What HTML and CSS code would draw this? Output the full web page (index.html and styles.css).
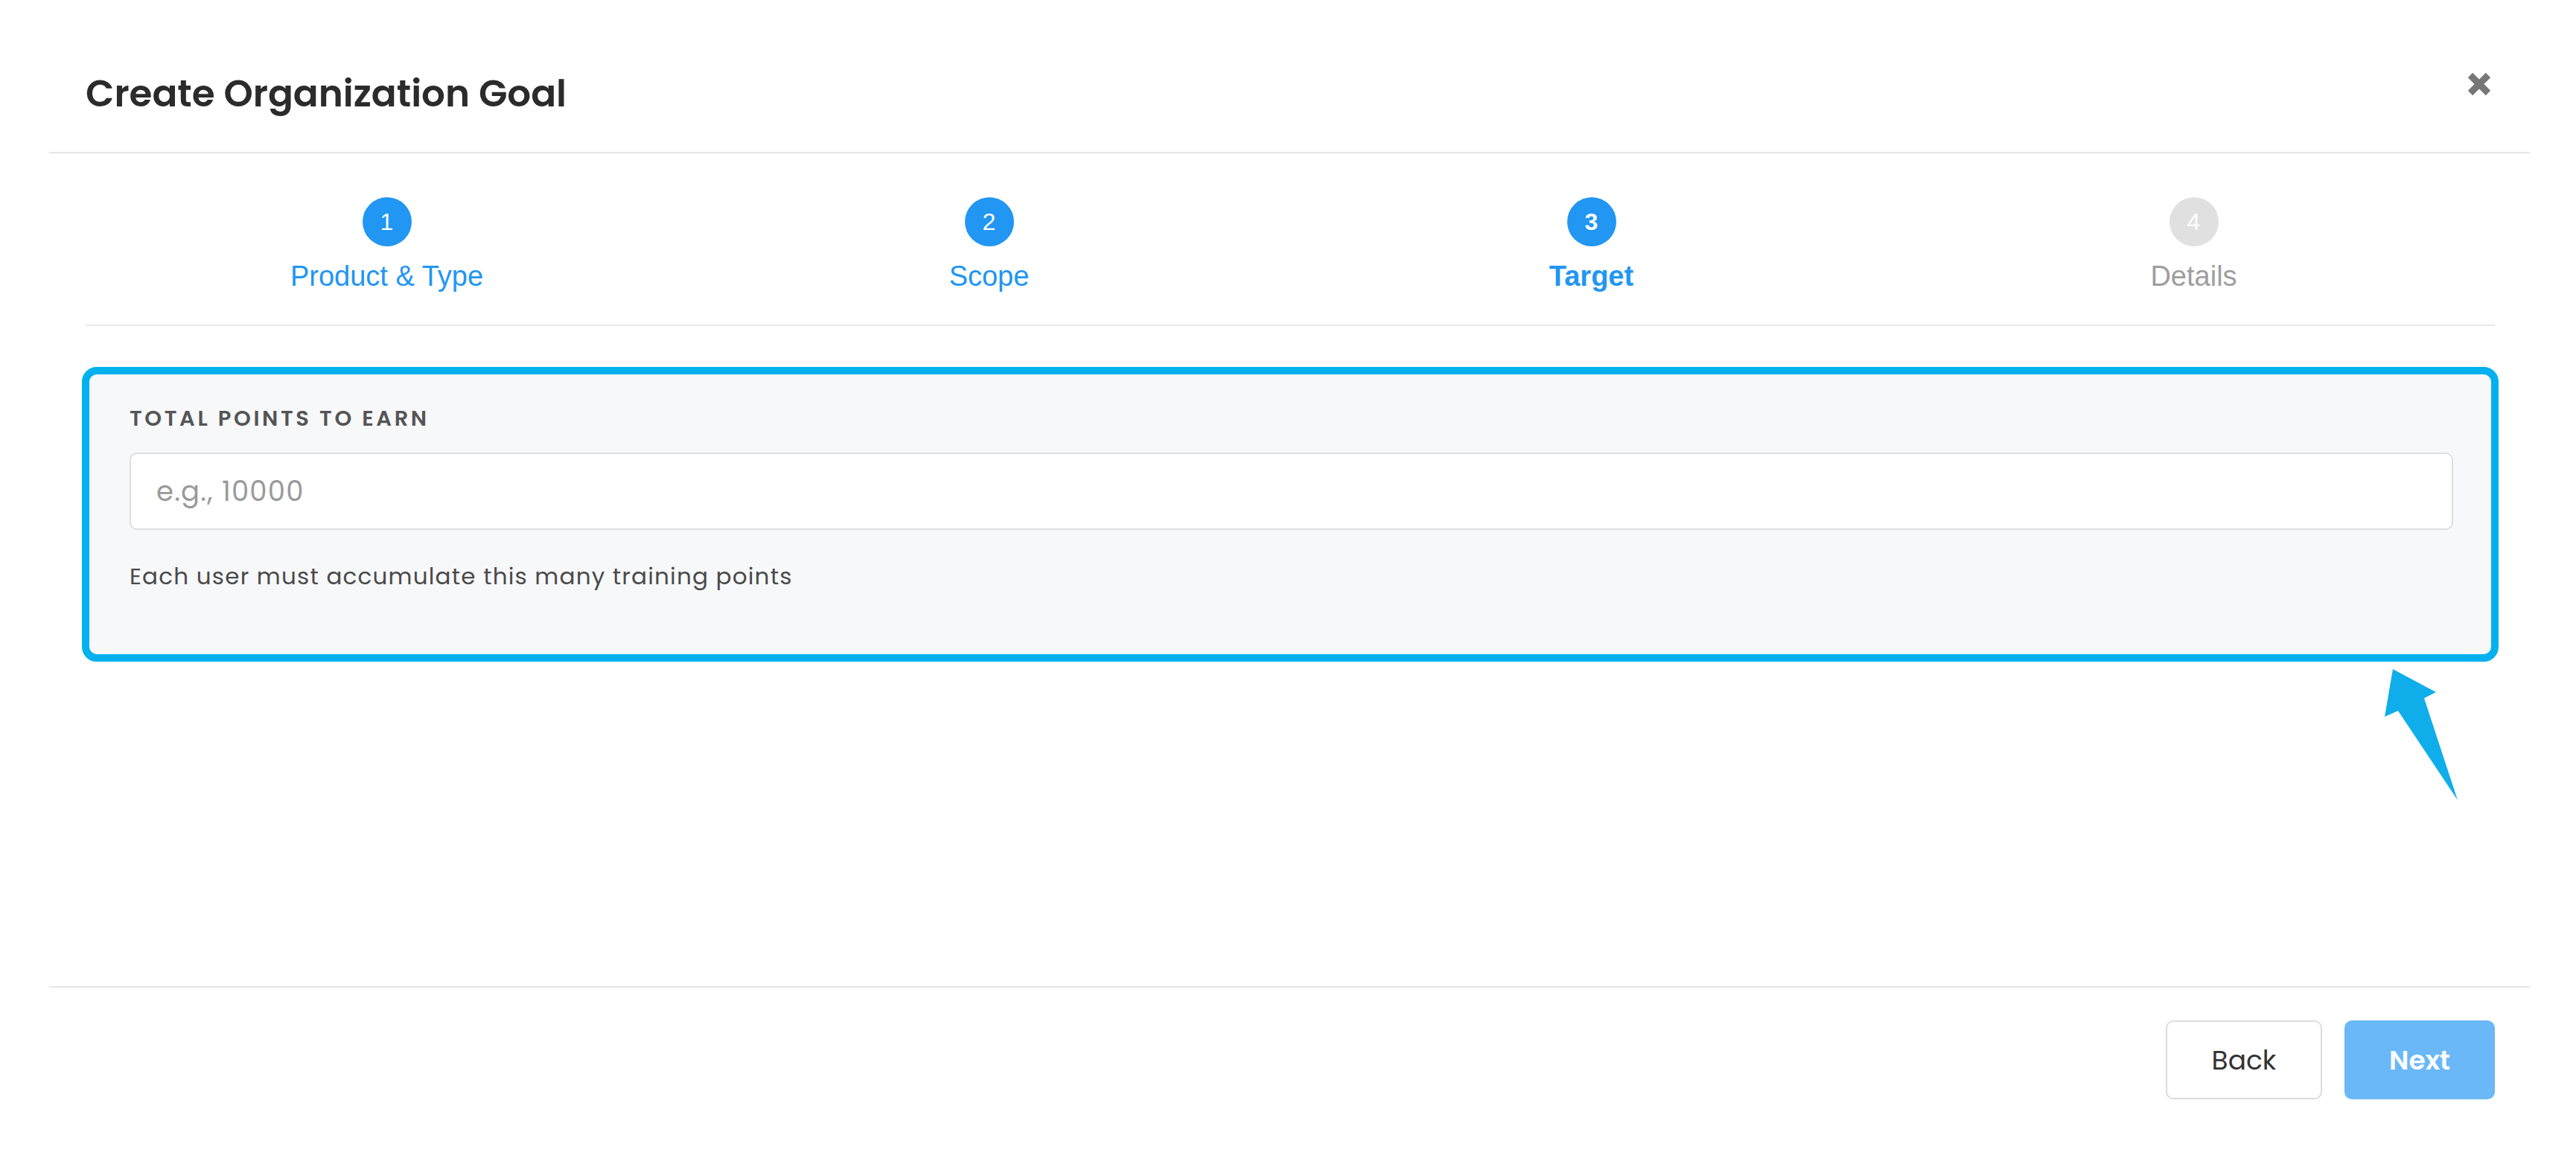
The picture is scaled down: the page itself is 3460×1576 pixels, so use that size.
FILE: index.html
```html
<!DOCTYPE html>
<html lang="en">
<head>
  <meta charset="UTF-8" />
  <meta name="viewport" content="width=device-width, initial-scale=1" />
  <title>Create Organization Goal</title>
  <link rel="stylesheet" href="styles.css">
</head>
<body>

  <div class="modal">
    <div class="modal-header">
      <h1 class="modal-title">Create Organization Goal</h1>
      <button class="close-btn" aria-label="Close">
        <svg viewBox="0 0 34 34" width="34" height="34">
          <path d="M5 5 L29 29 M29 5 L5 29" stroke="#777" stroke-width="9" />
        </svg>
      </button>
    </div>

    <div class="modal-body">
      <div class="stepper">
        <div class="step done">
          <span class="step-num">1</span>
          <span class="step-label">Product &amp; Type</span>
        </div>
        <div class="step done">
          <span class="step-num">2</span>
          <span class="step-label">Scope</span>
        </div>
        <div class="step current">
          <span class="step-num">3</span>
          <span class="step-label">Target</span>
        </div>
        <div class="step">
          <span class="step-num">4</span>
          <span class="step-label">Details</span>
        </div>
      </div>

      <div class="field-card">
        <label class="field-label" for="points">Total points to earn</label>
        <input type="text" id="points" class="field-input" placeholder="e.g., 10000" autocomplete="off" />
        <p class="field-help">Each user must accumulate this many training points</p>
      </div>
    </div>

    <div class="modal-footer">
      <button class="btn btn-back">Back</button>
      <button class="btn btn-next" disabled>Next</button>
    </div>
  </div>

  <!-- callout arrow -->
  <svg class="callout-arrow" viewBox="0 0 105 185" width="105" height="185">
    <polygon points="14,4 72,35 56,43 101,180 21,60 3,68" fill="#0faeea" />
  </svg>

</body>
</html>
```

FILE: styles.css
```css
* {
  box-sizing: border-box;
  margin: 0;
  padding: 0;
}

html, body {
  width: 3460px;
  height: 1576px;
  background: #fff;
  font-family: "Poppins", Inter, "Noto Sans", sans-serif;
  color: #2d2d2d;
  overflow: hidden;
}

.modal {
  margin-left: 66px;
  width: 3332px;
  height: 1576px;
  display: flex;
  flex-direction: column;
}

/* Header */
.modal-header {
  height: 206px;
  padding: 48px 51px 0 49px;
  display: flex;
  align-items: center;
  justify-content: space-between;
  border-bottom: 2px solid #e6e6e6;
}

.modal-title {
  font-size: 50px;
  font-weight: 600;
  line-height: 62px;
  color: #2b2b2b;
}

.close-btn {
  border: none;
  background: none;
  width: 34px;
  height: 34px;
  margin-bottom: 26px;
  cursor: pointer;
  display: flex;
}

/* Body */
.modal-body {
  height: 1119px;
  padding: 0 47px 0 49px;
}

.stepper {
  display: grid;
  grid-template-columns: repeat(4, 1fr);
  padding: 59px 0 45px;
  border-bottom: 2px solid #e6e6e6;
}

.step {
  display: flex;
  flex-direction: column;
  align-items: center;
  font-family: "Helvetica Neue", "Liberation Sans", Arial, sans-serif;
}

.step-num {
  width: 66px;
  height: 66px;
  border-radius: 50%;
  background: #e0e0e0;
  color: #fff;
  font-size: 32px;
  font-weight: 500;
  display: flex;
  align-items: center;
  justify-content: center;
}

.step-label {
  margin-top: 20px;
  font-size: 38px;
  line-height: 40px;
  color: #9e9e9e;
}

.step.done .step-num,
.step.current .step-num {
  background: #2196f3;
}

.step.done .step-label,
.step.current .step-label {
  color: #2196f3;
}

.step.current .step-num,
.step.current .step-label {
  font-weight: bold;
}

/* Target card */
.field-card {
  margin: 55px -5px 0;
  border: 10px solid #03b1ef;
  border-radius: 20px;
  background: #f7f8fa;
  padding: 41px 51px 85px 54px;
}

.field-label {
  display: block;
  font-size: 29px;
  line-height: 36px;
  font-weight: 600;
  letter-spacing: 3.6px;
  text-transform: uppercase;
  color: #555;
}

.field-input {
  display: block;
  width: 100%;
  height: 104px;
  margin-top: 28px;
  padding: 0 34px;
  border: 2px solid #dedede;
  border-radius: 10px;
  background: #fff;
  font-family: inherit;
  font-size: 37px;
  letter-spacing: 1.2px;
  color: #333;
  outline: none;
}

.field-input::placeholder {
  color: #9a9a9a;
}

.field-help {
  margin-top: 42px;
  font-size: 31px;
  line-height: 40px;
  letter-spacing: 1.2px;
  color: #4a4a4a;
}

/* Footer */
.modal-footer {
  border-top: 2px solid #e6e6e6;
  padding: 44px 47px 0 0;
  display: flex;
  justify-content: flex-end;
  gap: 30px;
}

.btn {
  height: 106px;
  border-radius: 10px;
  font-family: inherit;
  font-size: 36px;
  cursor: pointer;
}

.btn-back {
  width: 210px;
  background: #fff;
  border: 2px solid #dcdcdc;
  color: #333;
}

.btn-next {
  width: 202px;
  background: #6ab8f7;
  border: none;
  color: #fff;
  font-weight: 600;
}

/* Callout arrow */
.callout-arrow {
  position: absolute;
  left: 3200px;
  top: 895px;
}
```
